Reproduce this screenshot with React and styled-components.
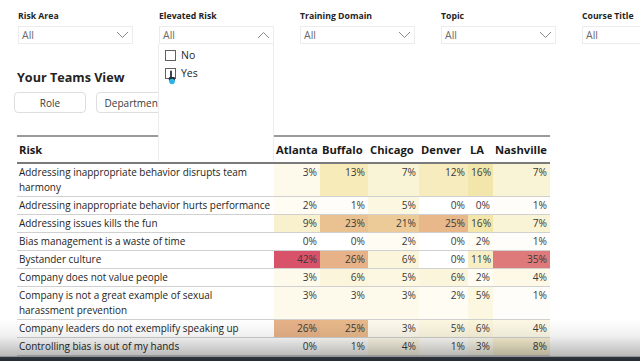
import React from "react";
import styled, { createGlobalStyle } from "styled-components";

const GlobalStyle = createGlobalStyle`
  html, body {
    margin: 0;
    padding: 0;
    background: #ffffff;
    overflow: hidden;
  }
  body {
    font-family: "Open Sans", "Noto Sans", Arial, sans-serif;
    color: #252423;
  }
`;

// page frame
const Page = styled.div`
  position: relative;
  width: 640px;
  height: 361px;
  overflow: hidden;
  box-sizing: border-box;
  padding: 10px 0 0 17px;
`;

// slicers across the top
const FilterBar = styled.div`
  display: flex;
  gap: 26px;
  padding-left: 1px;
`;

const Filter = styled.div`
  position: relative;
  flex: 0 0 115px;
  display: flex;
  flex-direction: column;
`;

const FilterLabel = styled.div`
  font-size: 8.7px;
  font-weight: 700;
  line-height: 12px;
  color: #252423;
  margin-bottom: 4px;
  white-space: nowrap;
`;

const Select = styled.div`
  height: 18px;
  box-sizing: border-box;
  border: 1px solid #ececec;
  display: flex;
  align-items: center;
  justify-content: space-between;
  padding: 0 3px 0 3px;
  font-size: 10.5px;
  color: #6a6a6a;
  background: #fff;
`;

const Menu = styled.div`
  position: absolute;
  top: 100%;
  left: -1px;
  width: 116px;
  height: 117px;
  box-sizing: border-box;
  background: #ffffff;
  border-left: 1px solid #ededed;
  border-right: 1px solid #ededed;
  padding-top: 2px;
  z-index: 5;
`;

const MenuItem = styled.div`
  display: flex;
  align-items: center;
  gap: 5px;
  height: 18px;
  padding-left: 6px;
  font-size: 10.5px;
  color: #252423;
`;

const Checkbox = styled.span`
  width: 9px;
  height: 9px;
  border: 1px solid #606060;
  background: #fff;
  display: inline-block;
`;

const Cursor = styled.svg`
  position: absolute;
  left: 8px;
  top: 26px;
`;

const SectionTitle = styled.h2`
  margin: 25px 0 0 0;
  font-size: 12.6px;
  line-height: 18px;
  font-weight: 700;
  color: #252423;
`;

const ButtonRow = styled.div`
  display: flex;
  gap: 10px;
  margin: 5px 0 0 -3px;
`;

const ViewButton = styled.div`
  width: ${(p) => p.$w}px;
  height: 21px;
  box-sizing: border-box;
  border: 1px solid #dedede;
  border-radius: 4px;
  display: flex;
  align-items: center;
  justify-content: center;
  font-size: 10px;
  color: #3a3a3a;
  white-space: nowrap;
  overflow: hidden;
`;

// heat table
const HeatTable = styled.table`
  margin-top: 22px;
  border-collapse: collapse;
  table-layout: fixed;
  width: 533px;
`;

const HeadCell = styled.th`
  height: 25px;
  padding: 0 2px;
  text-align: left;
  font-size: 11.2px;
  font-weight: 700;
  color: #1a1a1a;
  border-top: 2px solid #9a9a9a;
  border-bottom: 2px solid #7a7a7a;
  white-space: nowrap;
`;

const RiskCell = styled.td`
  padding: 1px 1px 1px 2px;
  font-size: 9.95px;
  line-height: 15px;
  color: #252423;
  white-space: pre-line;
  overflow: hidden;
  border-bottom: 1px solid #d0d0d0;
`;

const ValueCell = styled.td`
  padding: 1px 3px;
  font-size: 10.2px;
  line-height: 15px;
  text-align: right;
  vertical-align: top;
  color: #3a3a3a;
  border-bottom: 1px solid #d0d0d0;
`;

const Vignette = styled.div`
  position: absolute;
  left: 0;
  right: 0;
  bottom: 0;
  height: 42px;
  pointer-events: none;
  background: linear-gradient(
    to bottom,
    rgba(0, 0, 0, 0) 0%,
    rgba(0, 0, 0, 0.06) 40%,
    rgba(0, 0, 0, 0.28) 89%,
    #30363f 90%,
    #262b33 100%
  );
`;

const Chevron = ({ up }) => (
  <svg width="13" height="8" viewBox="0 0 13 8">
    <path
      d={up ? "M1 7 L6.5 1.5 L12 7" : "M1 1 L6.5 6.5 L12 1"}
      fill="none"
      stroke="#8a8a8a"
      strokeWidth="1"
    />
  </svg>
);

const filters = ["Risk Area", "Elevated Risk", "Training Domain", "Topic", "Course Title"];

const cities = [
  { name: "Atlanta", w: 46 },
  { name: "Buffalo", w: 48 },
  { name: "Chicago", w: 51 },
  { name: "Denver", w: 49 },
  { name: "LA", w: 25 },
  { name: "Nashville", w: 57 },
];

const rows = [
  ["Addressing inappropriate behavior disrupts team\nharmony", [3, 13, 7, 12, 16, 7]],
  ["Addressing inappropriate behavior hurts performance", [2, 1, 5, 0, 0, 1]],
  ["Addressing issues kills the fun", [9, 23, 21, 25, 16, 7]],
  ["Bias management is a waste of time", [0, 0, 2, 0, 2, 1]],
  ["Bystander culture", [42, 26, 6, 0, 11, 35]],
  ["Company does not value people", [3, 6, 5, 6, 2, 4]],
  ["Company is not a great example of sexual\nharassment prevention", [3, 3, 3, 2, 5, 1]],
  ["Company leaders do not exemplify speaking up", [26, 25, 3, 5, 6, 4]],
  ["Controlling bias is out of my hands", [0, 1, 4, 1, 3, 8]],
];

// colour stops for the heat scale
const stops = [
  [0, [255, 255, 255]],
  [5, [252, 247, 224]],
  [10, [248, 239, 200]],
  [16, [243, 230, 170]],
  [21, [236, 203, 152]],
  [25, [232, 184, 138]],
  [35, [223, 122, 122]],
  [42, [216, 82, 106]],
];

function heat(v) {
  for (let i = 1; i < stops.length; i++) {
    const [v1, c1] = stops[i];
    const [v0, c0] = stops[i - 1];
    if (v <= v1) {
      const t = (v - v0) / (v1 - v0);
      const c = c0.map((x, k) => Math.round(x + (c1[k] - x) * t));
      return `rgb(${c.join(",")})`;
    }
  }
  return "rgb(216,82,106)";
}

function App() {
  return (
    <Page>
      <GlobalStyle />
      <FilterBar>
        {filters.map((f) => (
          <Filter key={f}>
            <FilterLabel>{f}</FilterLabel>
            <Select>
              <span>All</span>
              <Chevron up={f === "Elevated Risk"} />
            </Select>
            {f === "Elevated Risk" && (
              <Menu>
                <MenuItem>
                  <Checkbox />
                  No
                </MenuItem>
                <MenuItem>
                  <Checkbox />
                  Yes
                </MenuItem>
                <Cursor width="10" height="15" viewBox="0 0 10 15">
                  <path d="M4 1.5 L4 8" stroke="#24303c" strokeWidth="1.8" strokeLinecap="round" />
                  <rect x="1.8" y="7" width="6.2" height="4" rx="1.2" fill="#24303c" />
                  <circle cx="5" cy="11.5" r="2.8" fill="#2bb5e8" />
                </Cursor>
              </Menu>
            )}
          </Filter>
        ))}
      </FilterBar>

      <SectionTitle>Your Teams View</SectionTitle>
      <ButtonRow>
        <ViewButton $w={72}>Role</ViewButton>
        <ViewButton $w={74}>Department</ViewButton>
      </ButtonRow>

      <HeatTable>
        <colgroup>
          <col style={{ width: 257 }} />
          {cities.map((c) => (
            <col key={c.name} style={{ width: c.w }} />
          ))}
        </colgroup>
        <thead>
          <tr>
            <HeadCell>Risk</HeadCell>
            {cities.map((c) => (
              <HeadCell key={c.name}>{c.name}</HeadCell>
            ))}
          </tr>
        </thead>
        <tbody>
          {rows.map(([risk, vals]) => (
            <tr key={risk}>
              <RiskCell>{risk}</RiskCell>
              {vals.map((v, i) => (
                <ValueCell key={i} style={{ background: heat(v) }}>
                  {v}%
                </ValueCell>
              ))}
            </tr>
          ))}
        </tbody>
      </HeatTable>
      <Vignette />
    </Page>
  );
}

export default App;
